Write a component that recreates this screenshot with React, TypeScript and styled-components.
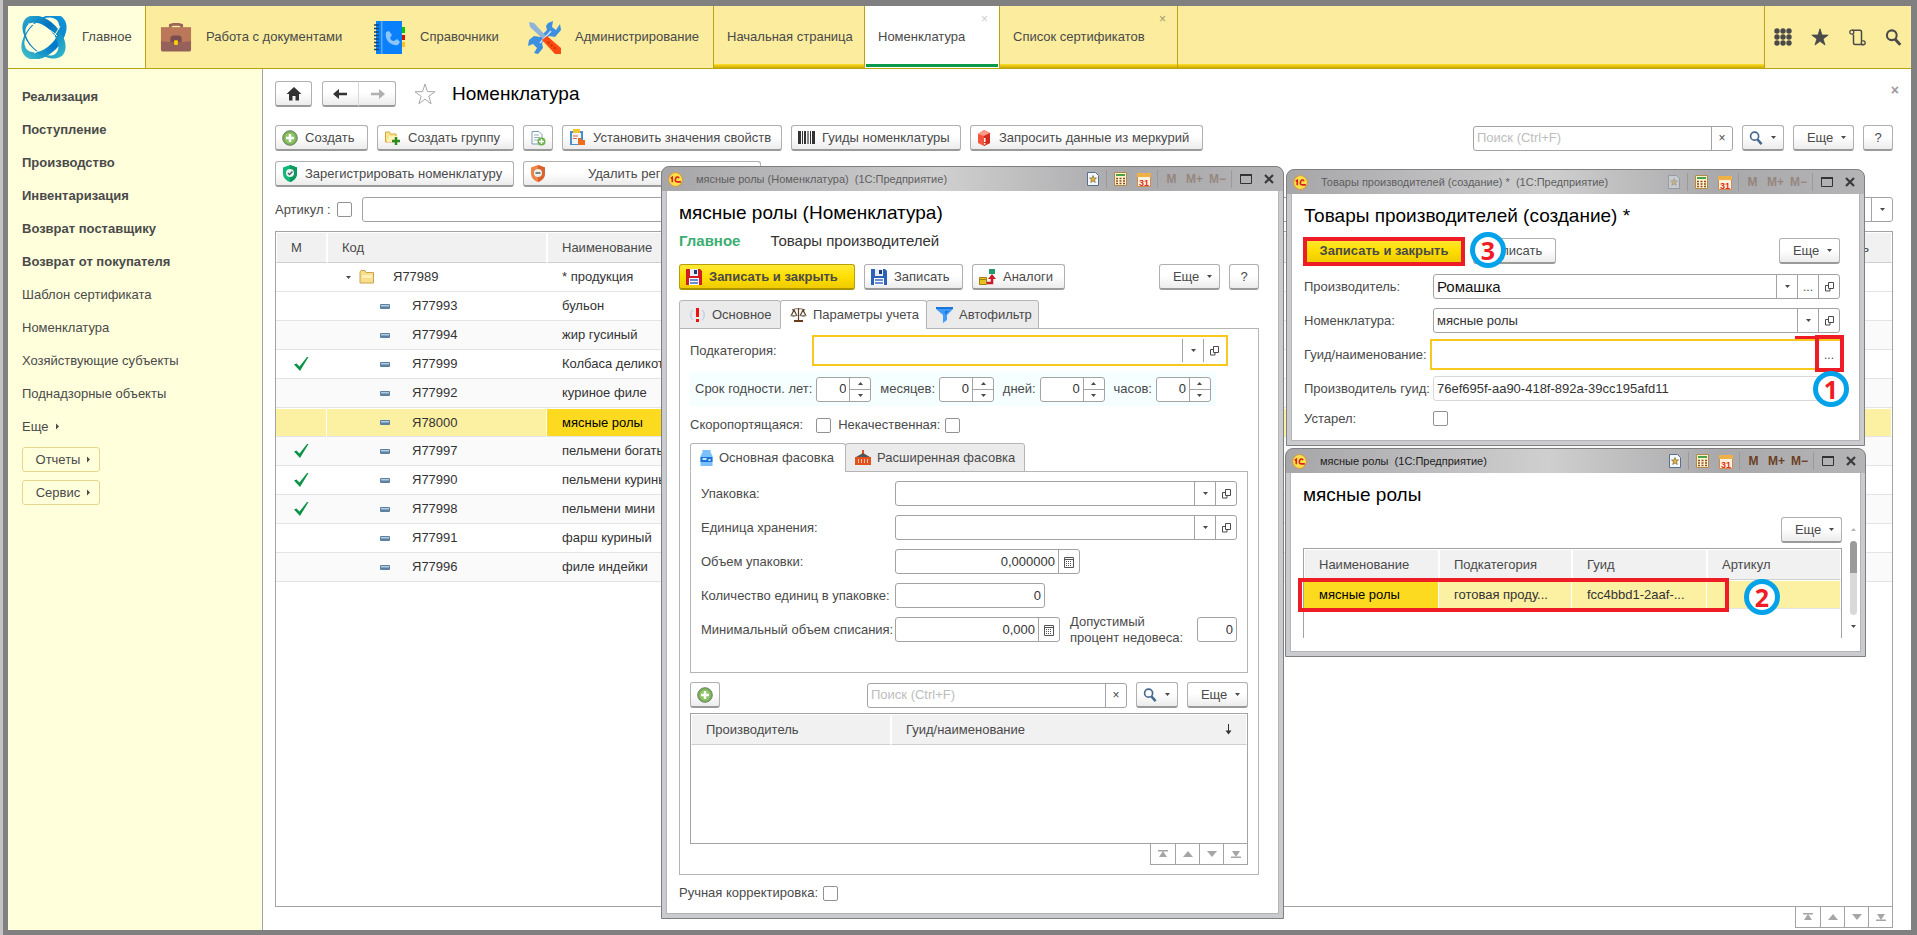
import React from "react";
import styled, { createGlobalStyle, css } from "styled-components";

const LINE = "#a3a3a3";
const GOLD = "#b9a316";
const TEXT = "#4a4a4a";

const GlobalStyle = createGlobalStyle`
  *, *::before, *::after { box-sizing: border-box; }
  body {
    margin: 0;
    background: #fff;
    color: ${TEXT};
    font: 13px/16px "Liberation Sans", Arial, sans-serif;
  }
  button, input, table { font: inherit; color: inherit; }
  a { color: inherit; text-decoration: none; }
  svg { display: block; flex: none; }
`;

/* ---------- frame ---------- */

const Frame = styled.div`
  position: relative;
  display: flex;
  flex-direction: column;
  min-height: 100vh;
  border: solid #808080;
  border-width: 6px 6px 5px 5px;
  margin-left: 3px;
  box-shadow: -3px 0 0 #c4c4c4;
`;

const Header = styled.header`
  display: flex;
  height: 63px;
  background: #fbec9e;
  border-bottom: 1px solid ${GOLD};
`;

const Section = styled.a<{ $w: number; $active?: boolean }>`
  display: flex;
  align-items: center;
  gap: 14px;
  width: ${(p) => p.$w}px;
  padding-left: 14px;
  white-space: nowrap;
  ${(p) =>
    p.$active &&
    css`
      padding-left: 12px;
      background: #ffffdc;
      border-right: 1px solid ${GOLD};
    `}
`;

const stripe = "linear-gradient(#ffdf2a, #cda900) bottom / 100% 4px no-repeat #fbec9e";

const PageTabs = styled.nav`
  display: flex;
  flex: 1;
  border-left: 1px solid ${GOLD};
  background: ${stripe};
`;

const PageTab = styled.div<{ $w: number; $active?: boolean }>`
  position: relative;
  display: flex;
  align-items: center;
  width: ${(p) => p.$w}px;
  padding: 0 13px;
  border-right: 1px solid ${GOLD};
  white-space: nowrap;
  background: ${(p) =>
    p.$active ? "linear-gradient(#0a9a4a, #0a9a4a) bottom 1px left 1px / calc(100% - 2px) 3px no-repeat #fff" : stripe};
`;

const TabClose = styled.button<{ $dim?: boolean }>`
  position: absolute;
  top: 7px;
  right: 11px;
  padding: 0;
  border: 0;
  background: none;
  font-size: 12px;
  line-height: 12px;
  color: ${(p) => (p.$dim ? "#cfcfcf" : "#a09a70")};
`;

const HeaderTools = styled.div`
  display: flex;
  align-items: center;
  justify-content: space-between;
  width: 147px;
  padding: 0 9px;
  border-left: 1px solid ${GOLD};
`;

const IconButton = styled.button`
  display: flex;
  padding: 0;
  border: 0;
  background: none;
`;

const Columns = styled.div`
  display: flex;
  flex: 1;
`;

const Side = styled.aside`
  display: flex;
  flex-direction: column;
  align-items: flex-start;
  width: 255px;
  padding: 11px 14px;
  background: #ffffdc;
  border-right: 1px solid ${LINE};
`;

const SideLink = styled.a<{ $bold?: boolean }>`
  line-height: 33px;
  font-weight: ${(p) => (p.$bold ? "bold" : "normal")};
  white-space: nowrap;
`;

const SideButton = styled.button`
  display: flex;
  align-items: center;
  justify-content: center;
  gap: 5px;
  width: 78px;
  height: 25px;
  margin: 4px 0;
  padding: 0 0 0 6px;
  background: #ffffdc;
  border: 1px solid #e6d88a;
  border-radius: 3px;
`;

const Main = styled.main`
  display: flex;
  flex: 1;
  flex-direction: column;
  min-width: 0;
  padding: 12px 18px 2px 12px;
`;

/* ---------- common controls ---------- */

const Row = styled.div<{ $gap?: number; $top?: number; $between?: boolean }>`
  display: flex;
  align-items: center;
  gap: ${(p) => p.$gap ?? 9}px;
  margin-top: ${(p) => p.$top ?? 0}px;
  ${(p) => p.$between && "justify-content: space-between;"}
`;

const Spacer = styled.span`
  flex: 1;
`;

const Title = styled.h1`
  margin: 0;
  font-size: 19px;
  line-height: 22px;
  font-weight: normal;
  color: #000;
  white-space: nowrap;
`;

const Button = styled.button<{ $w: number; $primary?: boolean; $center?: boolean }>`
  display: flex;
  align-items: center;
  justify-content: ${(p) => (p.$center ? "center" : "flex-start")};
  gap: 7px;
  flex: none;
  width: ${(p) => p.$w}px;
  height: 26px;
  padding: ${(p) => (p.$center ? "0" : "0 6px")};
  border: 1px solid ${(p) => (p.$primary ? "#b9a000" : "#b0b0b0")};
  border-bottom: 2px solid ${(p) => (p.$primary ? "#a99400" : "#9a9a9a")};
  border-radius: 3px;
  background: ${(p) =>
    p.$primary ? "linear-gradient(#ffe93a, #ffdf00 50%, #efcb00)" : "linear-gradient(#fff, #fff 45%, #ececec)"};
  font-weight: ${(p) => (p.$primary ? "bold" : "normal")};
  white-space: nowrap;
`;

const NavPair = styled.div`
  display: flex;
  margin: 0 18px 0 10px;
  button { border-radius: 3px 0 0 3px; }
  button + button { margin-left: -1px; border-radius: 0 3px 3px 0; border-left-color: #d8d8d8; }
`;

const CloseMark = styled.button`
  margin: 0 -6px 8px 0;
  padding: 0;
  border: 0;
  background: none;
  font-weight: bold;
  font-size: 14px;
  color: #9a9a9a;
`;

const FieldBox = styled.div<{ $w?: number; $focus?: boolean; $soft?: boolean }>`
  display: flex;
  ${(p) => (p.$w ? `flex: none; width: ${p.$w}px;` : "flex: 1; min-width: 0;")}
  height: 25px;
  border: 1px solid ${(p) => (p.$focus ? "transparent" : p.$soft ? "#d8d8d8" : LINE)};
  border-radius: ${(p) => (p.$focus ? 0 : 3)}px;
  background: #fff;
  ${(p) => p.$focus && "outline: 2px solid #f8c81e; outline-offset: 1px;"}
`;

const FieldInput = styled.input<{ $num?: boolean; $big?: boolean }>`
  flex: 1;
  width: 0;
  min-width: 0;
  padding: 0 3px;
  border: 0;
  outline: 0;
  background: transparent;
  text-align: ${(p) => (p.$num ? "right" : "left")};
  color: ${(p) => (p.$big ? "#111" : "#333")};
  font-size: ${(p) => (p.$big ? 15 : 13)}px;
  &::placeholder { color: #bdbdbd; opacity: 1; }
`;

const FieldButton = styled.button`
  display: flex;
  align-items: center;
  justify-content: center;
  width: 21px;
  padding: 0;
  border: 0;
  border-left: 1px solid ${LINE};
  background: none;
  font-size: 12px;
`;

const SpinButtons = styled.div`
  display: flex;
  flex-direction: column;
  width: 21px;
  border-left: 1px solid ${LINE};
  button { display: flex; flex: 1; align-items: center; justify-content: center; padding: 0; border: 0; background: none; }
  button + button { border-top: 1px solid ${LINE}; }
`;

const Check = styled.input.attrs({ type: "checkbox" })`
  appearance: none;
  flex: none;
  width: 15px;
  height: 15px;
  margin: 0;
  border: 1px solid #929292;
  border-radius: 2px;
  background: #fff;
`;

const Label = styled.label<{ $w?: number }>`
  ${(p) => p.$w && `flex: none; width: ${p.$w}px;`}
  white-space: nowrap;
`;

const GridFrame = styled.div<{ $top: number; $h?: number; $open?: boolean }>`
  ${(p) => (p.$h ? `height: ${p.$h}px;` : "flex: 1;")}
  margin-top: ${(p) => p.$top}px;
  border: 1px solid ${LINE};
  ${(p) => p.$open && "border-bottom: 0;"}
  overflow: hidden;
`;

const Grid = styled.table`
  width: 100%;
  table-layout: fixed;
  border-collapse: separate;
  border-spacing: 0;
  color: #333;
`;

const Th = styled.th<{ $right?: boolean }>`
  height: 31px;
  padding: 0 ${(p) => (p.$right ? 22 : 14)}px 0 14px;
  background: #f1f1f1;
  border: 1px solid #fff;
  box-shadow: 1px 0 0 #cfcfcf;
  border-bottom: 1px solid #cfcfcf;
  font-weight: normal;
  color: ${TEXT};
  text-align: ${(p) => (p.$right ? "right" : "left")};
  overflow: hidden;
`;

const Td = styled.td<{ $cur?: boolean }>`
  height: 29px;
  padding: 0 15px;
  border-bottom: 1px solid #e4e4e4;
  white-space: nowrap;
  overflow: hidden;
  ${(p) => p.$cur && "background: #fbda20; color: #000;"}
  > svg { margin: 0 auto; }
`;

const Tr = styled.tr<{ $sel?: boolean; $alt?: boolean }>`
  background: ${(p) => (p.$sel ? "#fcf0a2" : p.$alt ? "#fafafa" : "#fff")};
  ${(p) => p.$sel && "td { border-right: 1px solid #fff; border-top: 1px solid #fff; }"}
`;

const CodeCell = styled.div<{ $level: number }>`
  display: flex;
  align-items: center;
  padding-left: ${(p) => (p.$level ? 38 : 3)}px;
  gap: ${(p) => (p.$level ? 22 : 7)}px;
  svg + svg { margin-right: 11px; }
`;

const Pager = styled.div`
  display: flex;
  align-self: flex-end;
  margin-top: -1px;
  border: 1px solid ${LINE};
  button { display: flex; align-items: center; justify-content: center; width: 24px; height: 20px; padding: 0; border: 0; background: #fff; }
  button + button { border-left: 1px solid ${LINE}; }
`;

/* ---------- floating windows ---------- */

const WindowBox = styled.section<{ $x: number; $y: number; $w: number; $h: number }>`
  position: absolute;
  left: ${(p) => p.$x}px;
  top: ${(p) => p.$y}px;
  width: ${(p) => p.$w}px;
  height: ${(p) => p.$h}px;
  display: flex;
  flex-direction: column;
  padding: 0 5px 5px;
  border: 1px solid #7f7f7f;
  border-radius: 8px 8px 0 0;
  background: linear-gradient(90deg, #a6a6a9, #cfcfd0 45%, #a9a9ab 75%, #b4b4b6) top / 100% 24px no-repeat, #cacbce;
`;

const TitleBar = styled.header<{ $on?: boolean }>`
  display: flex;
  align-items: center;
  flex: none;
  height: 24px;
  margin: 0 -2px 0 -3px;
  padding-left: 4px;
  white-space: pre;
  font-size: 11px;
  color: ${(p) => (p.$on ? "#1c1c1c" : "#5e5e5e")};
  > span { margin-left: 13px; }
`;

const BarSlot = styled.button<{ $dim?: boolean }>`
  display: flex;
  align-items: center;
  justify-content: center;
  width: 23px;
  height: 20px;
  padding: 0;
  border: 0;
  background: none;
  font-size: 12px;
  font-weight: bold;
  color: #6b3f22;
  opacity: ${(p) => (p.$dim ? 0.35 : 1)};
`;

const BarLine = styled.i`
  width: 1px;
  height: 18px;
  margin: 0 2px;
  background: #9a9a9d;
`;

const Body = styled.div<{ $pad: string }>`
  flex: 1;
  display: flex;
  flex-direction: column;
  padding: ${(p) => p.$pad};
  border: 1px solid #b4b4b6;
  border-top: 0;
  margin: 0 -1px -1px;
  background: #fff;
`;

const FormLinks = styled.nav`
  display: flex;
  gap: 30px;
  margin-top: 8px;
  font-size: 15px;
  line-height: 18px;
  color: #333;
  a[aria-current] { font-weight: bold; color: #3cae72; }
`;

const TabRow = styled.div`
  position: relative;
  z-index: 1;
  display: flex;
  margin-top: 10px;
  margin-bottom: -1px;
`;

const Tab = styled.button<{ $w: number; $active?: boolean }>`
  display: flex;
  align-items: center;
  gap: 6px;
  width: ${(p) => p.$w}px;
  height: 29px;
  padding: 0 9px;
  border: 1px solid #b5b5b5;
  border-bottom-color: ${(p) => (p.$active ? "#fff" : "#b5b5b5")};
  border-radius: 3px 3px 0 0;
  background: ${(p) => (p.$active ? "#fff" : "#ebebeb")};
  white-space: nowrap;
  & + & { margin-left: -1px; }
`;

const Panel = styled.div<{ $pad: string }>`
  display: flex;
  flex-direction: column;
  padding: ${(p) => p.$pad};
  border: 1px solid #b5b5b5;
`;

const TermRow = styled.div`
  display: flex;
  align-items: center;
  justify-content: space-between;
  width: 526px;
  height: 34px;
  margin-top: 9px;
  padding: 0 5px;
  background: #f6ffff;
`;

const Stack = styled.div<{ $top?: number }>`
  display: flex;
  flex-direction: column;
  gap: 9px;
  margin-top: ${(p) => p.$top ?? 0}px;
`;

const TwoLine = styled.label`
  flex: none;
  width: 121px;
  height: 32px;
  margin-left: 10px;
`;

const Line = styled.div<{ $h?: number }>`
  position: relative;
  display: flex;
  align-items: center;
  height: ${(p) => p.$h ?? 25}px;
`;

const Anchor = styled.div`
  position: relative;
  display: flex;
`;

const PickArea = styled.div`
  position: relative;
  flex: 1;
`;

const ArticleField = styled.div`
  display: flex;
  flex: 1;
  margin-left: 4px;
`;

const RedFrame = styled.i<{ $x: number; $y: number; $w: number; $h: number }>`
  position: absolute;
  left: ${(p) => p.$x}px;
  top: ${(p) => p.$y}px;
  width: ${(p) => p.$w}px;
  height: ${(p) => p.$h}px;
  border: 4px solid #ee1c25;
  pointer-events: none;
`;

const RedDash = styled.i`
  position: absolute;
  right: 24px;
  top: -6px;
  width: 21px;
  height: 3px;
  background: #ee1c25;
`;

const Marker = styled.b<{ $x: number; $y: number }>`
  position: absolute;
  left: ${(p) => p.$x}px;
  top: ${(p) => p.$y}px;
  display: flex;
  align-items: center;
  justify-content: center;
  width: 36px;
  height: 36px;
  border: 5px solid #04a2e8;
  border-radius: 50%;
  background: #fff;
  font: bold 25px/26px "Open Sans", sans-serif;
  color: #ee1c25;
`;

const ScrollTrack = styled.div`
  display: flex;
  flex-direction: column;
  align-items: center;
  width: 8px;
  gap: 8px;
`;

const ScrollThumb = styled.i`
  width: 7px;
  height: 74px;
  border-radius: 4px;
  background: linear-gradient(#9a9a9a 32px, #d9d9d9 32px);
`;

/* ---------- icons ---------- */

const Caret = ({ dir = "down", color = TEXT }: { dir?: "down" | "up" | "right"; color?: string }) => (
  <svg width="7" height="7" viewBox="0 0 7 7">
    <path fill={color} d={dir === "down" ? "M1 2h5L3.500 5z" : dir === "up" ? "M1 5h5L3.500 2z" : "M2 0.500L5 3.500 2 6.500z"} />
  </svg>
);

const Logo = () => (
  <svg width="48" height="43" viewBox="0 0 48 43">
    <defs>
      <linearGradient id="ribbonA" x1="0" x2="1"><stop offset="0" stopColor="#2aa5cc" /><stop offset="0.4" stopColor="#0072c0" /><stop offset="1" stopColor="#2fb4ca" /></linearGradient>
      <linearGradient id="ribbonB" x1="0" x2="1"><stop offset="0" stopColor="#3cbcc8" /><stop offset="0.5" stopColor="#0078cc" /><stop offset="1" stopColor="#1295d8" /></linearGradient>
    </defs>
    <path fill="url(#ribbonB)" fillRule="evenodd" transform="rotate(-45 24 21)" d="M-3 21a27 17 0 1 0 54 0a27 17 0 1 0-54 0zM3 18a21 13 0 1 0 42 0a21 13 0 1 0-42 0z" />
    <path fill="url(#ribbonA)" fillRule="evenodd" transform="rotate(45 24 21)" d="M-2 21a26 16 0 1 0 52 0a26 16 0 1 0-52 0zM4 24a20 12 0 1 0 40 0a20 12 0 1 0-40 0z" />
    <path fill="none" stroke="#ffffdc" strokeWidth="1" d="M8 8c10 0 23 5 29 12M40 10C34 22 26 32 14 37" />
  </svg>
);

const Briefcase = () => (
  <svg width="32" height="31" viewBox="0 0 34 32">
    <path fill="none" stroke="#99635a" strokeWidth="3" d="M11 6V3l3-1h6l3 1v3" />
    <path fill="#bb7859" d="M1 5h32v17H1z" />
    <path fill="#96615b" d="M1 20l11 1h10l11-1v9a2 2 0 0 1-2 2H3a2 2 0 0 1-2-2z" />
    <path fill="#784e52" d="M11 21v-5l2-2h8l2 2v5z" />
    <rect x="15" y="19" width="4" height="5" rx="1" fill="#ffd000" />
  </svg>
);

const Book = () => (
  <svg width="33" height="33" viewBox="0 0 33 33">
    <path fill="#00c800" d="M26 6h6v6h-6z" /><path fill="#c8140a" d="M26 14h6v5h-6z" /><path fill="#ffc020" d="M26 21h6v5h-6z" />
    <path fill="#0a80fa" d="M3 0h26v33H3z" /><path fill="#57a9fb" d="M8 0h1.500v33H8z" />
    <path stroke="#17456b" strokeWidth="1.500" d="M1 4h5M1 7.500h5M1 11h5M1 14.500h5M1 18h5M1 21.500h5M1 25h5M1 28.500h5" />
    <path fill="#8cc4fc" d="M13 11l3-1 3 4-2 3c1 2 2 3 4 3l3-2 3 3-2 3c-6 1-14-4-12-13z" />
  </svg>
);

const Tools = () => (
  <svg width="33" height="33" viewBox="0 0 33 33">
    <path fill="#3f8fe0" d="M20 2l5-2-1 6 4 3 4-6 1 6-6 7-6-1-7 7 1 5-5 6-4-1 3-5-4-4-5 2 1-6 5-4 6 1 7-7-1-4z" />
    <path fill="#8fb4d8" d="M1 1l5 1 13 14-3 3L2 6z" />
    <path stroke="#cfe2f5" strokeWidth="1.500" d="M12 22l11-12" />
    <path fill="#fb4b12" d="M14 19l5-4 14 12v6h-6z" /><path stroke="#c82e06" strokeWidth="2" strokeDasharray="2 2" d="M20 21l9 8" />
  </svg>
);

const Star = ({ size = 22, fill = "none", stroke = "#a8a8a8" }) => (
  <svg width={size} height={size} viewBox="0 0 22 22">
    <path fill={fill} stroke={stroke} d="M11 1l2.400 7.600 7.600.1-6.200 4.600 2.300 7.500L11 16.200l-6.100 4.600 2.300-7.500L1 8.700l7.600-.1z" />
  </svg>
);

const Lens = ({ color = "#44688f", size = 14 }) => (
  <svg width={size} height={size} viewBox="0 0 15 15">
    <circle cx="6" cy="5.500" r="4.300" fill="none" stroke={color} strokeWidth="1.800" />
    <path stroke={color} strokeWidth="2.600" d="M9 9l4.500 5" />
  </svg>
);

const Plus = () => (
  <svg width="16" height="16" viewBox="0 0 16 16">
    <circle cx="8" cy="8" r="7.300" fill="#79b152" stroke="#71806b" strokeWidth="1" /><circle cx="8" cy="8" r="5.500" fill="#8cc566" />
    <path stroke="#fff" strokeWidth="2.500" d="M8 4v8M4 8h8" />
  </svg>
);

const FolderPlus = () => (
  <svg width="17" height="16" viewBox="0 0 17 16">
    <path fill="#fbe38a" stroke="#d4a640" d="M1.500 2h4l1 2H12v8H1.500z" /><path fill="#fff3b8" d="M5 6h9l-2 6H3z" />
    <path stroke="#2e8a1e" strokeWidth="2.500" d="M12 7v8M8 11h8" />
  </svg>
);

const Folder = () => (
  <svg width="16" height="14" viewBox="0 0 16 14">
    <path fill="#f8df8c" stroke="#c9a350" d="M1 2l1-1.500h4L7 2.500h7.500V13H1z" /><path fill="#fdf0b8" d="M3 5h10v3H3z" />
  </svg>
);

const DocPlus = () => (
  <svg width="16" height="16" viewBox="0 0 16 16">
    <path fill="#fff" stroke="#7d98ac" d="M2 1.500h7l3 3V14H2z" /><path stroke="#9ab" d="M4 5h5M4 7.500h6M4 10h4" />
    <circle cx="11.500" cy="11.500" r="4" fill="#6cb048" /><path stroke="#fff" strokeWidth="1.500" d="M11.500 9v5M9 11.500h5" />
  </svg>
);

const Clipboard = () => (
  <svg width="17" height="17" viewBox="0 0 17 17">
    <path fill="#4a8fd0" d="M1 2h13v14H1z" /><path fill="#eef4fa" d="M3 4h9v11H3z" /><path fill="#f2c52c" d="M4 0h7v4H4z" />
    <path stroke="#e06a30" d="M4 7h5M4 9.500h4" /><path fill="#ee6c1c" d="M9 9h3v2h4v5H9z" />
  </svg>
);

const Barcode = () => (
  <svg width="17" height="13" viewBox="0 0 17 13">
    <path fill="#333" d="M0 0h3v13H0zM4 0h1v13H4zM6 0h2v13H6zM12 0h1v13h-1zM14 0h3v13h-3z" /><path fill="#888" d="M9 0h2v13H9z" />
  </svg>
);

const RedBox = () => (
  <svg width="15" height="16" viewBox="0 0 15 16">
    <path fill="#f4553f" d="M1 4l6-4 6 3v10l-6 3-6-3z" /><path fill="#fa9a86" d="M1 4l6-4 6 3-6 3z" /><path fill="#d42a1c" d="M7 6l6-3v10l-6 3z" />
    <path fill="#fff" d="M7 8h1.500v4H7zM7 13h1.500v1.500H7z" />
  </svg>
);

const Shield = ({ a, b, minus }: { a: string; b: string; minus?: boolean }) => (
  <svg width="16" height="17" viewBox="0 0 16 17">
    <path fill={a} d="M8 0l7 2.500V8c0 5-3 7.500-7 9-4-1.500-7-4-7-9V2.500z" /><path fill={b} d="M8 0l7 2.500V8c0 5-3 7.500-7 9z" />
    <circle cx="8" cy="8" r="4" fill="#e9f3ef" /><path stroke="#50606a" strokeWidth="1.500" fill="none" d={minus ? "M5.500 8h5" : "M6 8l1.500 1.500 3-3"} />
  </svg>
);

const Home = () => (
  <svg width="16" height="14" viewBox="0 0 16 14"><path fill="#333" d="M8 0l7.500 7H13v6.500H9.500V9h-3v4.500H3V7H.5z" /></svg>
);

const Arrow = ({ color, flip }: { color: string; flip?: boolean }) => (
  <svg width="15" height="12" viewBox="0 0 15 12"><path fill={color} d={flip ? "M15 6L9 1v3.800H1v2.400h8V11z" : "M0 6l6-5v3.800h8v2.400H6V11z"} /></svg>
);

const SortArrow = () => (
  <svg width="7" height="11" viewBox="0 0 7 11"><path fill="none" stroke="#333" d="M3.500 0v8" /><path fill="#333" d="M0.500 6.500h6L3.500 10.500z" /></svg>
);

const OpenIcon = () => (
  <svg width="9" height="10" viewBox="0 0 9 10"><path fill="none" stroke="#4a4a4a" d="M3.500.5h5v6h-5zM3 3.500H.5v5.500H5V7" /></svg>
);

const CalcMini = () => (
  <svg width="10" height="12" viewBox="0 0 10 12">
    <path fill="#fff" stroke="#555" d="M.5 1.500h9v10h-9z" /><path stroke="#555" d="M1 3.500h8" strokeWidth="1" />
    <path stroke="#555" strokeDasharray="1 1" d="M2 5.500h6M2 7.500h6M2 9.500h6" />
  </svg>
);

const CheckMark = () => (
  <svg width="15" height="14" viewBox="0 0 15 14"><path fill="#0a9448" d="M0 7.500l2.500-1 3 3L13 0h1.500L6 14z" /></svg>
);

const Item = () => (
  <svg width="10" height="5" viewBox="0 0 10 5"><rect width="10" height="5" rx="1" fill="#5b80a0" /><path fill="#b2cbe0" d="M1 1h8v1.500H1z" /></svg>
);

const Floppy = ({ c }: { c: string }) => (
  <svg width="16" height="16" viewBox="0 0 16 16">
    <path fill={c} d="M0 0h14l2 2v14H0z" /><path fill="#e8eef8" d="M4 0h8v7H4z" /><path fill="#223c78" d="M8 1h3v4H8z" />
    <path fill="#fff" d="M3 9h10v7H3z" /><path stroke="#3a68c0" strokeWidth="1.500" d="M4 11h8M4 14h8" />
  </svg>
);

const Analog = () => (
  <svg width="17" height="16" viewBox="0 0 17 16">
    <path fill="#e8c020" stroke="#a08010" d="M.5 8.500h7v7h-7z" /><path stroke="#a08010" d="M1 10.500h6" /><path fill="#1f9a6a" d="M10 0h6v5h-6z" />
    <path fill="none" stroke="#d01828" strokeWidth="2.500" d="M8 14h5V8" /><path fill="#d01828" d="M9 10l4-5 4 5z" />
  </svg>
);

const Alert = () => (
  <svg width="17" height="14" viewBox="0 0 17 14">
    <path fill="#f01010" d="M7 0h3v9H7zM7 11h3v3H7z" /><path fill="none" stroke="#c5d0e4" strokeWidth="1.500" d="M4 2C1 4 1 10 4 12M13 2c3 2 3 8 0 10" />
  </svg>
);

const Scales = () => (
  <svg width="17" height="15" viewBox="0 0 17 15">
    <path stroke="#5b4028" strokeWidth="1.200" fill="none" d="M8.500 1v12M2 3q6-3 13 0M4 3L1 9M4 3l3 6M13 3l-3 6M13 3l3 6" />
    <path fill="#8d8a80" d="M0 8h7q-3 4-7 0zM10 8h7q-4 4-7 0z" /><path fill="#6b3a1c" d="M4 13h9v2H4z" />
  </svg>
);

const Funnel = () => (
  <svg width="17" height="16" viewBox="0 0 17 16"><path fill="#3f9cff" d="M0 0h17v2l-6 6v5l-4 3V8L0 2z" /><path fill="#1c74d8" d="M0 0h17v2H0zM9 4h4l-4 4z" /></svg>
);

const Milk = () => (
  <svg width="13" height="16" viewBox="0 0 12 16"><path fill="#7cc0fa" d="M2 0h8v2l2 4v10H0V6l2-4z" /><path fill="#1a74d8" d="M0 7h12v5H0z" /><path fill="#cfe8fd" d="M2 8h4v2H2zM8 9h2v2H8z" /></svg>
);

const Container = () => (
  <svg width="16" height="15" viewBox="0 0 16 15"><path fill="#e05020" d="M7 0h2v4H7zM0 7h16v8H0z" /><path fill="#555" d="M8 3l7 4H1z" /><path stroke="#ffc09a" d="M3.500 9v4M6.500 9v4M9.500 9v4M12.500 9v4" /></svg>
);

const OneC = () => (
  <svg width="15" height="15" viewBox="0 0 14 14">
    <circle cx="7" cy="7" r="6.500" fill="#fbe04a" stroke="#d09a50" /><path fill="none" stroke="#d8201c" strokeWidth="1.500" d="M2.500 6L4 5v4.500M10.500 5.500Q8 3.500 7 6.500T10 9.200H12" />
  </svg>
);

const PageStar = () => (
  <svg width="12" height="14" viewBox="0 0 12 14"><path fill="#f4f8fc" stroke="#58708c" d="M.5.5h8l3 3v10H.5z" /><path fill="#e8b030" stroke="#6a5a30" strokeWidth=".6" d="M6 3.500l1 2.500h2.500L7.500 7.800l.8 2.700L6 9l-2.300 1.500.8-2.700L2.500 6H5z" /></svg>
);

const Calc = () => (
  <svg width="13" height="14" viewBox="0 0 13 14"><path fill="#fff3cc" stroke="#b08a4a" d="M.5.500h12v13H.5z" /><path fill="#48a048" d="M2 2h9v2H2z" /><path stroke="#8a4a2a" strokeWidth="1.300" strokeDasharray="2 1.500" d="M2 6.500h9M2 9h9M2 11.500h9" /></svg>
);

const Calendar = () => (
  <svg width="14" height="15" viewBox="0 0 14 15">
    <path fill="#fff3dc" stroke="#d08a50" d="M.5 2.500h13v12H.5z" /><path fill="#f0b048" d="M0 1h14v4H0z" />
    <text x="7" y="13.500" fontSize="9" fontWeight="bold" textAnchor="middle" fill="#e03020">31</text>
  </svg>
);

const MaxIcon = () => (
  <svg width="12" height="12" viewBox="0 0 12 12"><path fill="none" stroke="#333" d="M.5 1.500h11v9H.5z" /><path stroke="#333" strokeWidth="2" d="M0 2h12" /></svg>
);

const CloseIcon = () => (
  <svg width="10" height="10" viewBox="0 0 10 10"><path stroke="#3a3a3a" strokeWidth="2.200" d="M1 1l8 8M9 1L1 9" /></svg>
);

const Dots9 = () => (
  <svg width="18" height="18" viewBox="0 0 18 18">
    {[3, 9, 15].map((y) => [3, 9, 15].map((x) => <circle key={`${x}-${y}`} cx={x} cy={y} r="2.700" fill="#4a4a4a" />))}
  </svg>
);

const Scroll = () => (
  <svg width="17" height="17" viewBox="0 0 17 17">
    <path fill="none" stroke="#4a4a4a" strokeWidth="1.500" d="M4.500 5.500V14q0 1.500 1.500 1.500h8.500M3 1.200h8q1.500 0 1.500 1.500V12" />
    <circle cx="2.800" cy="3.200" r="2" fill="none" stroke="#4a4a4a" strokeWidth="1.300" /><circle cx="14.200" cy="13.800" r="2" fill="none" stroke="#4a4a4a" strokeWidth="1.300" />
  </svg>
);

const PageMark = ({ kind }: { kind: number }) => (
  <svg width="12" height="8" viewBox="0 0 12 8">
    <path fill="#a6a6a6" d={["M1 0h10v1.500H1zM6 1l4 6H2z", "M6 1l5 6H1z", "M6 7l5-6H1z", "M1 6.500h10V8H1zM6 7l4-6H2z"][kind]} />
  </svg>
);

/* ---------- composed parts ---------- */

const Pages = () => (
  <Pager>
    {["В начало", "Вверх", "Вниз", "В конец"].map((t, i) => (
      <button key={t} aria-label={t}><PageMark kind={i} /></button>
    ))}
  </Pager>
);

const MoreButton = () => (
  <Button $w={61} $center>
    <span>&nbsp;&nbsp;Еще</span>
    <Caret />
  </Button>
);

const Search = ({ w }: { w: number }) => (
  <FieldBox $w={w}>
    <FieldInput placeholder="Поиск (Ctrl+F)" aria-label="Поиск" />
    <FieldButton aria-label="Очистить">×</FieldButton>
  </FieldBox>
);

type FieldProps = { id: string; w?: number; value?: string; tail?: string; num?: boolean; focus?: boolean; big?: boolean; soft?: boolean };

const tails: Record<string, React.ReactNode> = { d: <Caret />, e: "...", o: <OpenIcon />, c: <CalcMini /> };
const tailNames: Record<string, string> = { d: "Список", e: "Выбрать", o: "Открыть", c: "Калькулятор" };

const Field = ({ id, w, value = "", tail = "", num, focus, big, soft }: FieldProps) => (
  <FieldBox $w={w} $focus={focus} $soft={soft}>
    <FieldInput id={id} defaultValue={value} $num={num} $big={big} />
    {tail.split("").map((k) => (
      <FieldButton key={k} aria-label={tailNames[k]}>{tails[k]}</FieldButton>
    ))}
  </FieldBox>
);

const Spin = ({ id, w, label }: { id: string; w: number; label: string }) => (
  <Row $gap={4}>
    <Label htmlFor={id}>{label}</Label>
    <FieldBox $w={w}>
      <FieldInput id={id} defaultValue="0" $num />
      <SpinButtons>
        <button aria-label="Больше"><Caret dir="up" /></button>
        <button aria-label="Меньше"><Caret /></button>
      </SpinButtons>
    </FieldBox>
  </Row>
);

type WindowProps = { x: number; y: number; w: number; h: number; caption: string; on?: boolean; star?: boolean; pad: string; children: React.ReactNode };

const Window = ({ x, y, w, h, caption, on, star, pad, children }: WindowProps) => (
  <WindowBox $x={x} $y={y} $w={w} $h={h}>
    <TitleBar $on={on}>
      <OneC />
      <span>{caption}</span>
      <Spacer />
      <BarSlot $dim={!star} aria-label="В избранное"><PageStar /></BarSlot>
      <BarLine />
      <BarSlot aria-label="Калькулятор"><Calc /></BarSlot>
      <BarSlot aria-label="Календарь"><Calendar /></BarSlot>
      <BarLine />
      <BarSlot $dim={!on}>M</BarSlot>
      <BarSlot $dim={!on}>M+</BarSlot>
      <BarSlot $dim={!on}>M−</BarSlot>
      <BarLine />
      <BarSlot aria-label="Развернуть"><MaxIcon /></BarSlot>
      <BarSlot aria-label="Закрыть"><CloseIcon /></BarSlot>
    </TitleBar>
    <Body $pad={pad}>{children}</Body>
  </WindowBox>
);

const rows = [
  { code: "Я77989", name: "* продукция", folder: true },
  { code: "Я77993", name: "бульон" },
  { code: "Я77994", name: "жир гусиный" },
  { code: "Я77999", name: "Колбаса деликотесная", mark: true },
  { code: "Я77992", name: "куриное филе" },
  { code: "Я78000", name: "мясные ролы", sel: true },
  { code: "Я77997", name: "пельмени богатырские", mark: true },
  { code: "Я77990", name: "пельмени куриные", mark: true },
  { code: "Я77998", name: "пельмени мини", mark: true },
  { code: "Я77991", name: "фарш куриный" },
  { code: "Я77996", name: "филе индейки" },
];

const ItemWindow = () => (
  <Window x={653} y={160} w={623} h={753} star caption="мясные ролы (Номенклатура)  (1С:Предприятие)" pad="11px 19px 12px 12px">
    <Title as="h2">мясные ролы (Номенклатура)</Title>
    <FormLinks>
      <a href="#main" aria-current="page">Главное</a>
      <a href="#goods">Товары производителей</a>
    </FormLinks>
    <Row $top={14}>
      <Button $w={176} $primary><Floppy c="#d01c24" />Записать и закрыть</Button>
      <Button $w={99}><Floppy c="#2c62b8" />Записать</Button>
      <Button $w={93}><Analog />Аналоги</Button>
      <Spacer />
      <MoreButton />
      <Button $w={30} $center>?</Button>
    </Row>
    <TabRow>
      <Tab $w={102}><Alert />Основное</Tab>
      <Tab $w={147} $active><Scales />Параметры учета</Tab>
      <Tab $w={113}><Funnel />Автофильтр</Tab>
    </TabRow>
    <Panel $pad="9px 10px 9px">
      <Row $gap={0}>
        <Label $w={125} htmlFor="subcat">Подкатегория:</Label>
        <Field id="subcat" w={410} tail="do" focus />
      </Row>
      <TermRow>
        <Spin id="years" w={55} label="Срок годности. лет:" />
        <Spin id="months" w={55} label="месяцев:" />
        <Spin id="days" w={65} label="дней:" />
        <Spin id="hours" w={55} label="часов:" />
      </TermRow>
      <Row $top={11} $gap={0}>
        <Label $w={126} htmlFor="perish">Скоропортящаяся:</Label>
        <Check id="perish" />
        <Row $gap={5}>
          <Label htmlFor="bad">&nbsp;&nbsp;Некачественная:</Label>
          <Check id="bad" />
        </Row>
      </Row>
      <TabRow>
        <Tab $w={156} $active><Milk />Основная фасовка</Tab>
        <Tab $w={180}><Container />Расширенная фасовка</Tab>
      </TabRow>
      <Panel $pad="9px 10px 30px 10px">
        <Stack>
          <Line><Label $w={194} htmlFor="pack">Упаковка:</Label><Field id="pack" tail="do" /></Line>
          <Line><Label $w={194} htmlFor="unit">Единица хранения:</Label><Field id="unit" tail="do" /></Line>
          <Line><Label $w={194} htmlFor="vol">Объем упаковки:</Label><Field id="vol" w={185} num value="0,000000" tail="c" /></Line>
          <Line><Label $w={194} htmlFor="qty">Количество единиц в упаковке:</Label><Field id="qty" w={150} num value="0" /></Line>
          <Line>
            <Label $w={194} htmlFor="min">Минимальный объем списания:</Label>
            <Field id="min" w={165} num value="0,000" tail="c" />
            <TwoLine htmlFor="pct">Допустимый<br />процент недовеса:</TwoLine>
            <Spacer />
            <Field id="pct" w={40} num value="0" />
          </Line>
        </Stack>
      </Panel>
      <Row $top={9}>
        <Button $w={30} $center aria-label="Добавить"><Plus /></Button>
        <Spacer />
        <Search w={260} />
        <Button $w={42} $center aria-label="Найти"><Lens /><Caret /></Button>
        <MoreButton />
      </Row>
      <GridFrame $top={5} $h={131}>
        <Grid>
          <colgroup><col style={{ width: 200 }} /><col /></colgroup>
          <thead>
            <tr>
              <Th>Производитель</Th>
              <Th><Row $between>Гуид/наименование<SortArrow /></Row></Th>
            </tr>
          </thead>
        </Grid>
      </GridFrame>
      <Pages />
    </Panel>
    <Row $top={10} $gap={5}>
      <Label htmlFor="manual">Ручная корректировка:</Label>
      <Check id="manual" />
    </Row>
  </Window>
);

const MakerWindow = () => (
  <Window x={1278} y={163} w={579} h={277} caption="Товары производителей (создание) *  (1С:Предприятие)" pad="11px 19px 0 12px">
    <Title as="h2">Товары производителей (создание) *</Title>
    <Row $top={11}>
      <Anchor>
        <Button $w={160} $center $primary>Записать и закрыть</Button>
        <RedFrame $x={-1} $y={-1} $w={162} $h={29} />
      </Anchor>
      <Anchor>
        <Button $w={83} $center>Записать</Button>
        <Marker $x={-3} $y={-6}>3</Marker>
      </Anchor>
      <Spacer />
      <MoreButton />
    </Row>
    <Stack $top={10}>
      <Line><Label $w={129} htmlFor="maker">Производитель:</Label><Field id="maker" value="Ромашка" tail="deo" big /></Line>
      <Line><Label $w={129} htmlFor="nom">Номенклатура:</Label><Field id="nom" value="мясные ролы" tail="do" /></Line>
      <Line>
        <Label $w={129} htmlFor="guid">Гуид/наименование:</Label>
        <Field id="guid" tail="e" focus />
        <RedDash />
        <RedFrame $x={511} $y={-7} $w={29} $h={37} />
      </Line>
      <Line>
        <Label $w={129} htmlFor="mguid">Производитель гуид:</Label>
        <Field id="mguid" value="76ef695f-aa90-418f-892a-39cc195afd11" soft />
        <Marker $x={509} $y={-5}>1</Marker>
      </Line>
      <Line $h={17}><Label $w={129} htmlFor="old">Устарел:</Label><Check id="old" /></Line>
    </Stack>
  </Window>
);

const PickWindow = () => (
  <Window x={1277} y={442} w={581} h={209} star on caption="мясные ролы  (1С:Предприятие)" pad="11px 3px 12px 12px">
    <Title as="h2">мясные ролы</Title>
    <Row $top={11} $gap={7}>
      <PickArea>
        <Row><Spacer /><MoreButton /></Row>
        <GridFrame $top={5} $h={90} $open>
          <Grid>
            <colgroup><col style={{ width: 135 }} /><col style={{ width: 133 }} /><col style={{ width: 135 }} /><col /></colgroup>
            <thead><tr><Th>Наименование</Th><Th>Подкатегория</Th><Th>Гуид</Th><Th>Артикул</Th></tr></thead>
            <tbody><Tr $sel><Td $cur>мясные ролы</Td><Td>готовая проду...</Td><Td>fcc4bbd1-2aaf-...</Td><Td /></Tr></tbody>
          </Grid>
        </GridFrame>
        <RedFrame $x={-5} $y={61} $w={431} $h={34} />
        <Marker $x={441} $y={62}>2</Marker>
      </PickArea>
      <ScrollTrack><Caret dir="up" color="#b5b5b5" /><ScrollThumb /><Caret /></ScrollTrack>
    </Row>
  </Window>
);

export default function App() {
  return (
    <>
      <GlobalStyle />
      <Frame>
        <Header>
          <Section href="#home" $w={138} $active><Logo />Главное</Section>
          <Section href="#docs" $w={213}><Briefcase />Работа с документами</Section>
          <Section href="#refs" $w={155}><Book />Справочники</Section>
          <Section href="#admin" $w={199}><Tools />Администрирование</Section>
          <PageTabs>
            <PageTab $w={151}>Начальная страница</PageTab>
            <PageTab $w={135} $active>Номенклатура<TabClose $dim aria-label="Закрыть вкладку">×</TabClose></PageTab>
            <PageTab $w={178}>Список сертификатов<TabClose aria-label="Закрыть вкладку">×</TabClose></PageTab>
          </PageTabs>
          <HeaderTools>
            <IconButton aria-label="Функции"><Dots9 /></IconButton>
            <IconButton aria-label="Избранное"><Star size={18} fill="#4a4a4a" stroke="#4a4a4a" /></IconButton>
            <IconButton aria-label="История"><Scroll /></IconButton>
            <IconButton aria-label="Поиск"><Lens color="#4a4a4a" size={17} /></IconButton>
          </HeaderTools>
        </Header>
        <Columns>
          <Side>
            {["Реализация", "Поступление", "Производство", "Инвентаризация", "Возврат поставщику", "Возврат от покупателя"].map((t) => (
              <SideLink key={t} href="#" $bold>{t}</SideLink>
            ))}
            {["Шаблон сертификата", "Номенклатура", "Хозяйствующие субъекты", "Поднадзорные объекты"].map((t) => (
              <SideLink key={t} href="#">{t}</SideLink>
            ))}
            <SideLink href="#"><Row $gap={6}>Еще<Caret dir="right" /></Row></SideLink>
            <SideButton>Отчеты<Caret dir="right" /></SideButton>
            <SideButton>Сервис<Caret dir="right" /></SideButton>
          </Side>
          <Main>
            <Row $gap={0}>
              <Button $w={37} $center aria-label="Домой"><Home /></Button>
              <NavPair>
                <Button $w={37} $center aria-label="Назад"><Arrow color="#333" /></Button>
                <Button $w={38} $center aria-label="Вперед"><Arrow color="#b0b0b0" flip /></Button>
              </NavPair>
              <Row $gap={16}><Star /><Title>Номенклатура</Title></Row>
              <Spacer />
              <CloseMark aria-label="Закрыть">×</CloseMark>
            </Row>
            <Row $top={18}>
              <Button $w={93}><Plus />Создать</Button>
              <Button $w={137}><FolderPlus />Создать группу</Button>
              <Button $w={30} $center aria-label="Скопировать"><DocPlus /></Button>
              <Button $w={220}><Clipboard />Установить значения свойств</Button>
              <Button $w={170}><Barcode />Гуиды номенклатуры</Button>
              <Button $w={233}><RedBox />Запросить данные из меркурий</Button>
              <Spacer />
              <Search w={260} />
              <Button $w={42} $center aria-label="Найти"><Lens /><Caret /></Button>
              <MoreButton />
              <Button $w={30} $center>?</Button>
            </Row>
            <Row $top={10}>
              <Button $w={239}><Shield a="#12b877" b="#0a9a60" />Зарегистрировать номенклатуру</Button>
              <Button $w={238}><Shield a="#f08448" b="#d8642c" minus /><Spacer />Удалить регистрацию<Spacer /></Button>
            </Row>
            <Row $top={10} $gap={6}>
              <Label htmlFor="art">Артикул :</Label>
              <Check aria-label="Отбор по артикулу" />
              <ArticleField><Field id="art" tail="d" /></ArticleField>
            </Row>
            <GridFrame $top={9}>
              <Grid>
                <colgroup><col style={{ width: 51 }} /><col style={{ width: 220 }} /><col style={{ width: 420 }} /><col /></colgroup>
                <thead><tr><Th>М</Th><Th>Код</Th><Th>Наименование</Th><Th $right>Производитель</Th></tr></thead>
                <tbody>
                  {rows.map((r, i) => (
                    <Tr key={r.code} $sel={r.sel} $alt={i > 0 && i % 2 === 0}>
                      <Td>{r.mark && <CheckMark />}</Td>
                      <Td>
                        <CodeCell $level={r.folder ? 0 : 1}>
                          {r.folder ? <><Caret /><Folder /></> : <Item />}
                          {r.code}
                        </CodeCell>
                      </Td>
                      <Td $cur={r.sel}>{r.name}</Td>
                      <Td />
                    </Tr>
                  ))}
                </tbody>
              </Grid>
            </GridFrame>
            <Pages />
          </Main>
        </Columns>
        <ItemWindow />
        <MakerWindow />
        <PickWindow />
      </Frame>
    </>
  );
}
